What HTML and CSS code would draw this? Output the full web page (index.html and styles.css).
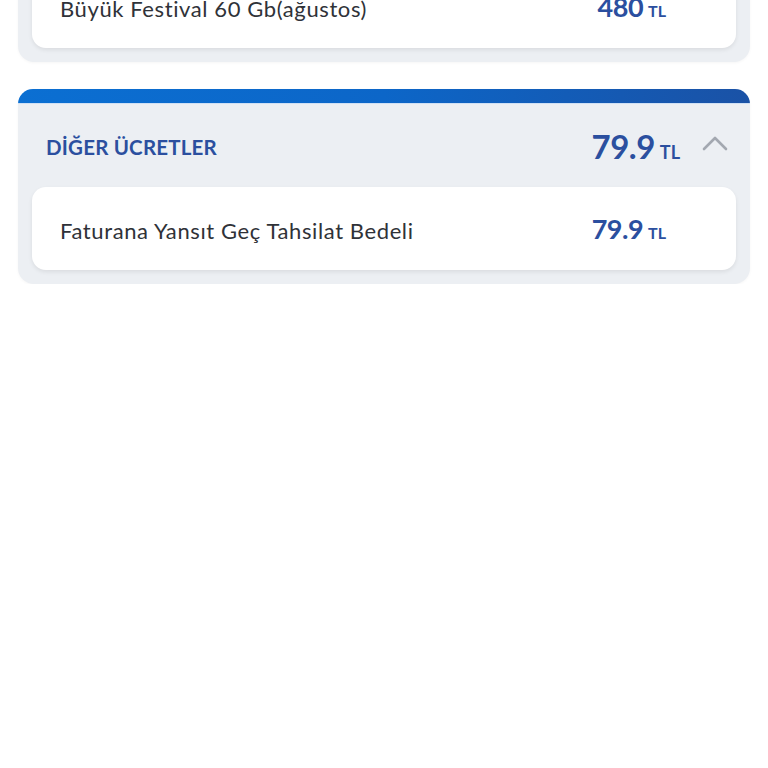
FILE: index.html
```html
<!DOCTYPE html>
<html lang="tr">
<head>
<meta charset="utf-8">
<link rel="stylesheet" href="styles.css">
</head>
<body>
<div class="page">
  <section class="panel panel-first">
    <div class="card">
      <span class="item-name">Büyük Festival 60 Gb(ağustos)</span>
      <span class="amount"><span class="num">480</span><span class="cur">TL</span></span>
    </div>
  </section>

  <section class="panel panel-second">
    <div class="bar"></div>
    <div class="header">
      <span class="title">DİĞER ÜCRETLER</span>
      <span class="header-right">
        <span class="amount amount-lg"><span class="num">79.9</span><span class="cur">TL</span></span>
        <svg class="chevron" width="26" height="16" viewBox="0 0 26 16"><path d="M2 14 L13 3 L24 14" fill="none" stroke="#a3a8b0" stroke-width="2.6" stroke-linecap="round" stroke-linejoin="round"/></svg>
      </span>
    </div>
    <div class="card">
      <span class="item-name">Faturana Yansıt Geç Tahsilat Bedeli</span>
      <span class="amount"><span class="num">79.9</span><span class="cur">TL</span></span>
    </div>
  </section>
</div>
</body>
</html>
```

FILE: styles.css
```css
html, body {
  margin: 0;
  padding: 0;
  background: #ffffff;
}
body {
  font-family: "Lato", "Open Sans", sans-serif;
  overflow: hidden;
}
.page {
  padding: 0 18px;
  display: flex;
  flex-direction: column;
  gap: 27px;
}
.panel {
  background: #eceff3;
  border-radius: 16px;
  padding: 0 14px 14px;
  box-shadow: 0 1px 3px rgba(0,0,0,0.04);
}
.panel-first {
  margin-top: -49px;
  padding-top: 14px;
}
.bar {
  height: 14px;
  margin: 0 -14px;
  border-radius: 16px 16px 0 0;
  background: linear-gradient(90deg, #0b6fd2 0%, #0c66c8 50%, #1a52a6 100%);
  border-bottom: 1px solid #cfe0f4;
}
.header {
  height: 83px;
  display: flex;
  align-items: center;
  justify-content: space-between;
  padding: 0 8px 0 14px;
}
.title {
  color: #2b4f9f;
  font-weight: 700;
  font-size: 20.5px;
  letter-spacing: 0.2px;
  padding-top: 2px;
}
.header-right {
  display: flex;
  align-items: center;
  gap: 22px;
}
.chevron {
  display: block;
  margin-top: -6px;
}
.card {
  background: #ffffff;
  border-radius: 14px;
  height: 83px;
  display: flex;
  align-items: center;
  justify-content: space-between;
  padding: 0 70px 0 28px;
  box-shadow: 0 2px 4px rgba(0,0,0,0.08);
}
.item-name {
  color: #2f3238;
  font-size: 22px;
  letter-spacing: 0.6px;
  padding-top: 3px;
}
.amount {
  color: #2b4f9f;
  font-weight: 700;
  display: flex;
  align-items: baseline;
  gap: 5px;
}
.amount .num {
  font-size: 27px;
  letter-spacing: -0.5px;
}
.amount .cur {
  font-size: 16px;
}
.amount-lg .num {
  font-size: 33px;
}
.amount-lg .cur {
  font-size: 18px;
}
```
